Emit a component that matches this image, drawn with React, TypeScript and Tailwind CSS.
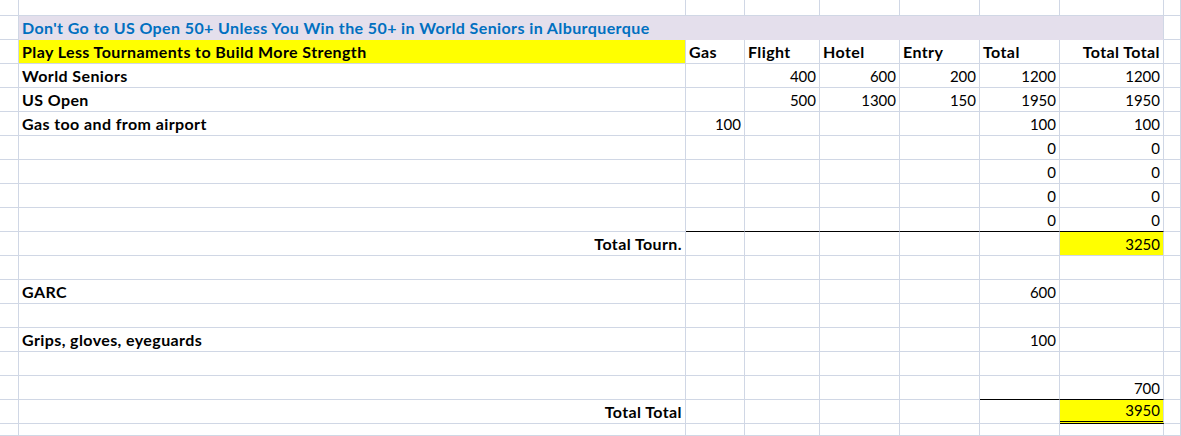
import React from 'react';

type Cell = {
  text?: string;
  align?: 'left' | 'right';
  bold?: boolean;
  bg?: string;
  blackBottom?: boolean;
  doubleBottom?: boolean;
};

// column widths include the 1px right gridline
const COLS = 'grid-cols-[19px_667px_59px_75px_80px_80px_80px_104px_1fr]';
const ROWS = 'grid-rows-[16px_repeat(17,24px)_12px]';

const L = (text: string): Cell => ({ text, align: 'left', bold: true });
const N = (text: string): Cell => ({ text, align: 'right' });

// data rows 2..17 (row 1 is the banner), columns 1..7
const data: Record<number, Record<number, Cell>> = {
  2: {
    1: { text: 'Play Less Tournaments to Build More Strength', align: 'left', bold: true, bg: 'bg-[#ffff00]' },
    2: L('Gas'),
    3: L('Flight'),
    4: L('Hotel'),
    5: L('Entry'),
    6: L('Total'),
    7: { text: 'Total Total', align: 'right', bold: true },
  },
  3: { 1: L('World Seniors'), 3: N('400'), 4: N('600'), 5: N('200'), 6: N('1200'), 7: N('1200') },
  4: { 1: L('US Open'), 3: N('500'), 4: N('1300'), 5: N('150'), 6: N('1950'), 7: N('1950') },
  5: { 1: L('Gas too and from airport'), 2: N('100'), 6: N('100'), 7: N('100') },
  6: { 6: N('0'), 7: N('0') },
  7: { 6: N('0'), 7: N('0') },
  8: { 6: N('0'), 7: N('0') },
  9: {
    2: { blackBottom: true },
    3: { blackBottom: true },
    4: { blackBottom: true },
    5: { blackBottom: true },
    6: { text: '0', align: 'right', blackBottom: true },
    7: { text: '0', align: 'right', blackBottom: true },
  },
  10: {
    1: { text: 'Total Tourn.', align: 'right', bold: true },
    7: { text: '3250', align: 'right', bg: 'bg-[#ffff00]' },
  },
  12: { 1: L('GARC'), 6: N('600') },
  14: { 1: L('Grips, gloves, eyeguards'), 6: N('100') },
  16: {
    6: { blackBottom: true },
    7: { text: '700', align: 'right', blackBottom: true },
  },
  17: {
    1: { text: 'Total Total', align: 'right', bold: true },
    7: { text: '3950', align: 'right', bg: 'bg-[#ffff00]', doubleBottom: true },
  },
};

const GridCell: React.FC<{ cell?: Cell }> = ({ cell }) => {
  const c = cell || {};
  let border = 'border-b border-b-[#d0d7e5]';
  if (c.blackBottom) border = 'border-b border-b-black';
  if (c.doubleBottom) border = 'border-b-[3px] border-double border-b-black';
  return (
    <div
      className={`flex items-end border-r border-r-[#d0d7e5] ${border} ${c.bg || 'bg-white'} ${
        c.align === 'right' ? 'justify-end pr-[3px]' : 'justify-start pl-[3px]'
      } pb-[2px] overflow-visible whitespace-nowrap`}
    >
      {c.text && (
        <span
          className={`leading-[18px] text-black ${
            c.bold ? 'font-bold text-[16px] tracking-[0.4px]' : 'font-normal text-[15px]'
          }`}
        >
          {c.text}
        </span>
      )}
    </div>
  );
};

const App: React.FC = () => {
  const rows: React.ReactNode[] = [];

  for (let r = 0; r < 19; r++) {
    for (let c = 0; c < 9; c++) {
      if (r === 1 && c >= 1 && c <= 7) {
        if (c === 1) {
          rows.push(
            <div
              key={`${r}-${c}`}
              className="col-span-7 flex items-end bg-[#e4dfec] border-r border-r-[#d0d7e5] border-b border-b-[#e4dfec] pl-[3px] pb-[2px] whitespace-nowrap"
            >
              <span className="leading-[18px] font-bold text-[16px] tracking-[0.4px] text-[#0070c0]">
                Don't Go to US Open 50+ Unless You Win the 50+ in World Seniors in Alburquerque
              </span>
            </div>
          );
        }
        continue;
      }
      const cell = data[r]?.[c];
      rows.push(<GridCell key={`${r}-${c}`} cell={cell} />);
    }
  }

  return (
    <div className="w-[1181px] h-[436px] overflow-hidden bg-white font-['Lato',sans-serif] text-[15px]">
      <div className={`grid ${COLS} ${ROWS} w-[1181px]`}>{rows}</div>
    </div>
  );
};

export default App;
